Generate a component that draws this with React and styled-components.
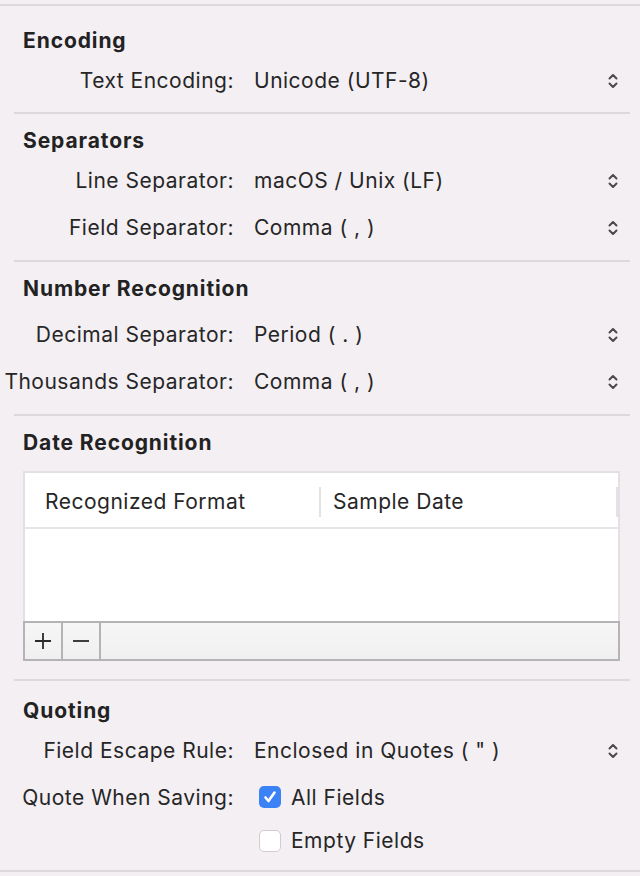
import React from 'react';
import styled, {createGlobalStyle} from 'styled-components';

const GlobalStyle = createGlobalStyle`
    html, body {
        margin: 0;
        padding: 0;
        background: #f3eff3;
    }
    body {
        font-family: Inter, "Liberation Sans", sans-serif;
        color: #262626;
        -webkit-font-smoothing: antialiased;
    }
`;

const Panel = styled.div`
    width: 640px;
    height: 876px;
    box-sizing: border-box;
    padding-top: 4px;
    background: #f3eff3;
    overflow: hidden;
`;

const EdgeLine = styled.div`
    height: 2px;
    background: #dcd8dc;
`;

const Divider = styled.div`
    height: 2px;
    margin: 0 10px 0 14px;
    background: #dcd8dc;
`;

const Section = styled.section`
    padding-top: ${p => p.$top}px;
    padding-bottom: ${p => p.$bottom}px;
`;

const Heading = styled.h3`
    margin: 0 0 ${p => p.$gap}px 23px;
    font-size: 21px;
    line-height: 24px;
    font-weight: 700;
    letter-spacing: 0.9px;
    color: #222;
`;

const Row = styled.div`
    display: grid;
    grid-template-columns: 234px 1fr 32px;
    column-gap: 20px;
    align-items: center;
    height: ${p => p.$h || 47}px;
`;

const Label = styled.span`
    font-size: 21px;
    letter-spacing: 0.5px;
    text-align: right;
    white-space: nowrap;
    direction: rtl;
    unicode-bidi: plaintext;
    color: #262626;
`;

const Value = styled.span`
    font-size: 21px;
    letter-spacing: 0.5px;
    white-space: nowrap;
    color: #262626;
    display: flex;
    align-items: center;
    gap: 10px;
`;

const Stepper = styled.span`
    display: flex;
    align-items: center;
    color: #4a4a4a;
`;

const Chevrons = () => (
    <svg width="10" height="16" viewBox="0 0 10 16" fill="none" stroke="currentColor" strokeWidth="2" strokeLinecap="round" strokeLinejoin="round">
        <path d="M1.5 5.5 L5 2 L8.5 5.5" />
        <path d="M1.5 10.5 L5 14 L8.5 10.5" />
    </svg>
);

const Table = styled.div`
    margin: 0 20px 0 23px;
    border: 2px solid #e2e0e2;
    background: #fff;
    display: flex;
    flex-direction: column;
`;

const TableHead = styled.div`
    display: grid;
    grid-template-columns: 296px 1fr;
    height: 51px;
    padding-top: 3px;
    align-items: center;
    border-bottom: 2px solid #e6e4e6;
`;

const HeadCell = styled.div`
    font-size: 21px;
    letter-spacing: 0.5px;
    color: #262626;
    padding-left: ${p => p.$pad}px;
    height: 30px;
    display: flex;
    align-items: center;
    border-right: 2px solid #e4e2e4;
`;

const TableBody = styled.div`
    height: 92px;
`;

const Toolbar = styled.div`
    display: flex;
    height: 36px;
    margin: 0 -2px -2px -2px;
    border: 2px solid #b5b3b5;
    background: linear-gradient(#f6f6f6, #f0f0f0);
`;

const ToolButton = styled.button`
    width: 38px;
    padding: 0;
    border: none;
    border-right: 2px solid #b5b3b5;
    background: transparent;
    display: flex;
    align-items: center;
    justify-content: center;
    color: #2a2a2a;
`;

const Check = styled.span`
    width: 22px;
    height: 22px;
    box-sizing: border-box;
    border-radius: 5px;
    display: inline-flex;
    align-items: center;
    justify-content: center;
    background: ${p => p.$on ? '#3b82f6' : '#fff'};
    border: ${p => p.$on ? 'none' : '1.5px solid #cfcdcf'};
    margin-left: 5px;
`;

const SelectRow = ({label, value}) => (
    <Row>
        <Label>{label}</Label>
        <Value>{value}</Value>
        <Stepper><Chevrons /></Stepper>
    </Row>
);

const CheckRow = ({label, text, on, h}) => (
    <Row $h={h}>
        <Label>{label}</Label>
        <Value>
            <Check $on={on}>
                {on && (
                    <svg width="16" height="16" viewBox="0 0 16 16" fill="none" stroke="#fff" strokeWidth="2.6" strokeLinecap="round" strokeLinejoin="round">
                        <path d="M3.5 8.5 L6.5 12 L12.5 3.5" />
                    </svg>
                )}
            </Check>
            {text}
        </Value>
        <span />
    </Row>
);

export default function App() {
    return (
        <Panel>
            <GlobalStyle />
            <EdgeLine />
            <Section $top={23} $bottom={8}>
                <Heading $gap={4}>Encoding</Heading>
                <SelectRow label="Text Encoding:" value="Unicode (UTF-8)" />
            </Section>
            <Divider />
            <Section $top={15} $bottom={9}>
                <Heading $gap={4}>Separators</Heading>
                <SelectRow label="Line Separator:" value="macOS / Unix (LF)" />
                <SelectRow label="Field Separator:" value="Comma ( , )" />
            </Section>
            <Divider />
            <Section $top={15} $bottom={9}>
                <Heading $gap={10}>Number Recognition</Heading>
                <SelectRow label="Decimal Separator:" value="Period ( . )" />
                <SelectRow label="Thousands Separator:" value="Comma ( , )" />
            </Section>
            <Divider />
            <Section $top={15} $bottom={18}>
                <Heading $gap={16}>Date Recognition</Heading>
                <Table>
                    <TableHead>
                        <HeadCell $pad={20}>Recognized Format</HeadCell>
                        <HeadCell $pad={12}>Sample Date</HeadCell>
                    </TableHead>
                    <TableBody />
                    <Toolbar>
                        <ToolButton aria-label="add">
                            <svg width="20" height="20" viewBox="0 0 20 20" stroke="currentColor" strokeWidth="1.8">
                                <path d="M10 2 V18 M2 10 H18" />
                            </svg>
                        </ToolButton>
                        <ToolButton aria-label="remove">
                            <svg width="20" height="20" viewBox="0 0 20 20" stroke="currentColor" strokeWidth="1.8">
                                <path d="M2 10 H18" />
                            </svg>
                        </ToolButton>
                    </Toolbar>
                </Table>
            </Section>
            <Divider />
            <Section $top={18} $bottom={9}>
                <Heading $gap={4}>Quoting</Heading>
                <SelectRow label="Field Escape Rule:" value={'Enclosed in Quotes ( " )'} />
                <CheckRow label="Quote When Saving:" text="All Fields" on h={46} />
                <CheckRow label="" text="Empty Fields" h={41} />
            </Section>
            <EdgeLine />
        </Panel>
    );
}
